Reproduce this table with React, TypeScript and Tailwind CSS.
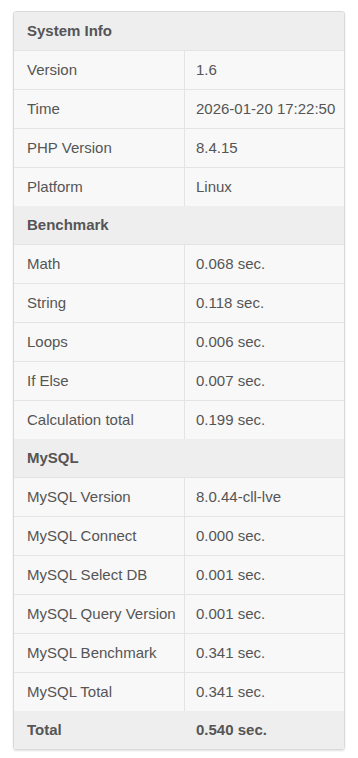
type Row = { label: string; value: string };

type Section = { title: string; rows: Row[] };

const sections: Section[] = [
  {
    title: "System Info",
    rows: [
      { label: "Version", value: "1.6" },
      { label: "Time", value: "2026-01-20 17:22:50" },
      { label: "PHP Version", value: "8.4.15" },
      { label: "Platform", value: "Linux" },
    ],
  },
  {
    title: "Benchmark",
    rows: [
      { label: "Math", value: "0.068 sec." },
      { label: "String", value: "0.118 sec." },
      { label: "Loops", value: "0.006 sec." },
      { label: "If Else", value: "0.007 sec." },
      { label: "Calculation total", value: "0.199 sec." },
    ],
  },
  {
    title: "MySQL",
    rows: [
      { label: "MySQL Version", value: "8.0.44-cll-lve" },
      { label: "MySQL Connect", value: "0.000 sec." },
      { label: "MySQL Select DB", value: "0.001 sec." },
      { label: "MySQL Query Version", value: "0.001 sec." },
      { label: "MySQL Benchmark", value: "0.341 sec." },
      { label: "MySQL Total", value: "0.341 sec." },
    ],
  },
];

export default function App() {
  return (
    <div className="min-h-[758px] bg-white pt-[11px] pl-[13px] font-['Liberation_Sans',Arial,sans-serif] text-[15px] text-[#555]">
      <div className="w-[332px] overflow-hidden rounded-[3px] border border-[#d9d9d9] shadow-[0_1px_2px_rgba(0,0,0,0.12)]">
        {sections.map((s) => (
          <div key={s.title}>
            <div className="flex h-[38px] items-center bg-[#eeeeee] pl-[13px] font-bold text-[#555]">
              {s.title}
            </div>
            {s.rows.map((r) => (
              <div
                key={r.label}
                className="flex h-[39px] border-t border-[#e4e4e4] bg-[#f8f8f8]"
              >
                <div className="flex w-[171px] items-center border-r border-[#e4e4e4] pl-[13px]">
                  {r.label}
                </div>
                <div className="flex flex-1 items-center pl-[11px]">
                  {r.value}
                </div>
              </div>
            ))}
          </div>
        ))}
        {/* Total */}
        <div className="flex h-[38px] bg-[#eeeeee] font-bold">
          <div className="flex w-[171px] items-center pl-[13px]">Total</div>
          <div className="flex flex-1 items-center pl-[11px]">0.540 sec.</div>
        </div>
      </div>
    </div>
  );
}
